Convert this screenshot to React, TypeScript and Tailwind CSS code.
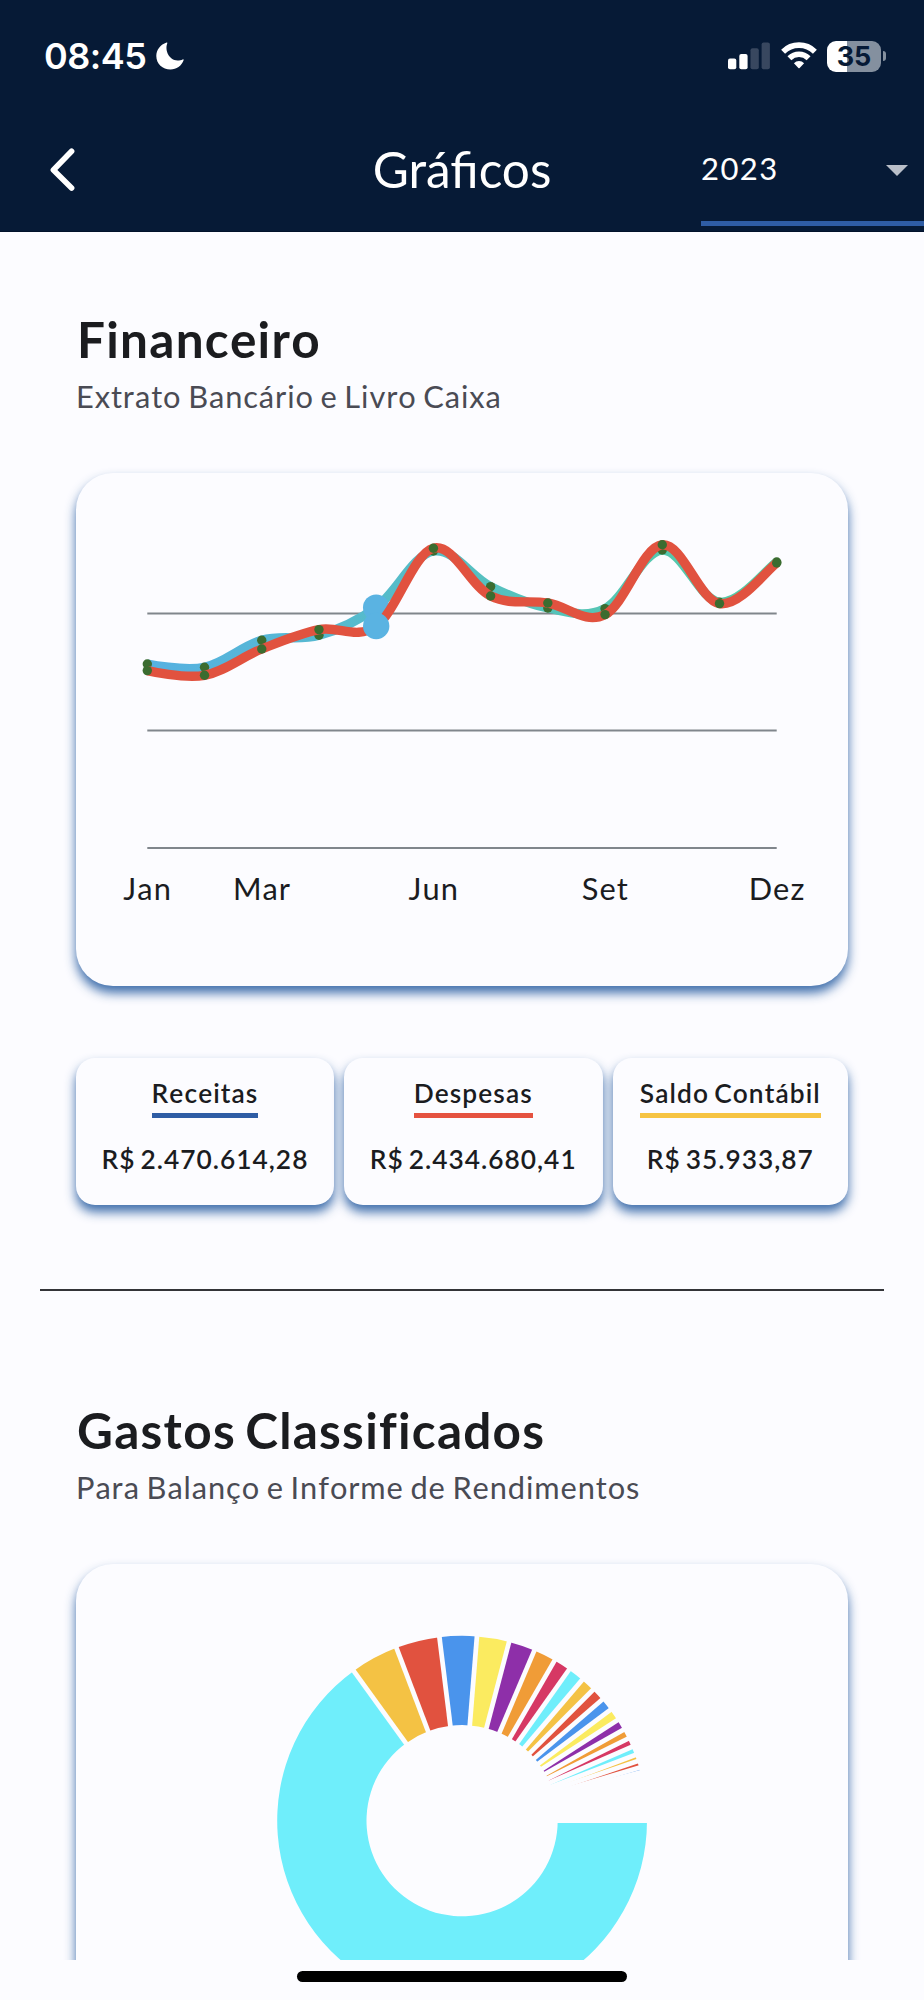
import { ReactNode } from "react";

type Point = [number, number];

interface ISummary {
  label: string;
  value: string;
  width: string;
  underline: string;
}

const STEP = 57.22;
const START_X = 147.3;

const receitas = [
  664, 667.3, 640.3, 635.3, 607.6, 551, 586.6, 608, 608.6, 550, 602.3, 562,
];
const despesas = [
  670.6, 675.3, 649, 629.6, 626, 548.2, 596, 603, 614.6, 544.8, 603.6, 563,
];
const SELECTED = 4;

const months = [
  { label: "Jan", index: 0 },
  { label: "Mar", index: 2 },
  { label: "Jun", index: 5 },
  { label: "Set", index: 8 },
  { label: "Dez", index: 11 },
];

const summaries: ISummary[] = [
  {
    label: "Receitas",
    value: "R$ 2.470.614,28",
    width: "w-[258px]",
    underline: "border-[#2f5da5]",
  },
  {
    label: "Despesas",
    value: "R$ 2.434.680,41",
    width: "w-[258.5px]",
    underline: "border-[#e55240]",
  },
  {
    label: "Saldo Contábil",
    value: "R$ 35.933,87",
    width: "w-[235.5px]",
    underline: "border-[#f6c443]",
  },
];

// slice limits in degrees, counter-clockwise from the right
const limits = [
  360, 125.9, 110.8, 97.04, 85.4, 75.27, 67, 60, 54.7, 49.55, 45, 40.85, 36.8,
  32.9, 29.4, 26.3, 23.5, 20.8, 18.75, 16.7, 15.2,
];
const sliceColors = [
  "#6feefb",
  "#f4c244",
  "#e1523f",
  "#4a94ec",
  "#fbeb60",
  "#8e2fa9",
  "#f09c37",
  "#d63864",
];

const toPoints = (values: number[]): Point[] =>
  values.map((y, i) => [START_X + STEP * i, y]);

const curve = (points: Point[]) => {
  const smoothness = 0.35;
  let d = `M${points[0][0]} ${points[0][1]}`;
  let tx = 0;
  let ty = 0;
  for (let i = 1; i < points.length; i++) {
    const prev = points[i - 1];
    const current = points[i];
    const next = points[i + 1] ?? current;
    const c1 = [prev[0] + tx, prev[1] + ty];
    tx = ((next[0] - prev[0]) / 2) * smoothness;
    ty = ((next[1] - prev[1]) / 2) * smoothness;
    d += ` C${c1[0]} ${c1[1]} ${current[0] - tx} ${current[1] - ty} ${current[0]} ${current[1]}`;
  }
  return d;
};

const polar = (radius: number, deg: number): Point => {
  const rad = (deg * Math.PI) / 180;
  return [462.1 + radius * Math.cos(rad), 1820.7 - radius * Math.sin(rad)];
};

const slicePath = (from: number, to: number) => {
  const outer = 184.9;
  const inner = 95.6;
  const large = from - to > 180 ? 1 : 0;
  return `M${polar(outer, from)} A${outer} ${outer} 0 ${large} 1 ${polar(outer, to)} L${polar(inner, to)} A${inner} ${inner} 0 ${large} 0 ${polar(inner, from)} Z`;
};

const StatusBar = () => (
  <div className="flex h-[112px] items-center justify-between pr-[38px] pl-[44px]">
    <div className="flex items-center gap-[10px]">
      <span className="font-['Inter'] text-[36px] leading-none font-semibold tracking-[-0.5px]">
        08:45
      </span>
      <svg className="h-[28px] w-[28px]" viewBox="0 0 28 28" fill="#fff">
        <path d="M10.6 0.6C11.2 0.3 11.6 0.7 11.3 1.3C8.5 8.6 13.2 18.4 21.5 18.4C23.6 18.4 25.2 18 26.7 17.4C27.3 17.2 27.8 17.7 27.6 18.3C25.5 24 20.5 27.5 14.5 27.5C6.6 27.5 0.3 21.8 0.3 14C0.3 8 4.5 2.6 10.6 0.6Z" />
      </svg>
    </div>
    <div className="flex items-center">
      <svg className="h-[28px] w-[42px]" viewBox="0 0 42 28">
        <rect x="0" y="16.5" width="8.3" height="10.8" rx="2" fill="#fff" />
        <rect x="11.3" y="12" width="8.3" height="15.3" rx="2" fill="#fff" />
        <rect x="22.5" y="6.3" width="8.3" height="21" rx="2" fill="#38475f" />
        <rect x="33.6" y="0.6" width="8.3" height="26.7" rx="2" fill="#38475f" />
      </svg>
      <svg
        className="ml-[11px] h-[28px] w-[36px]"
        viewBox="0 0 36 28"
        fill="none"
        stroke="#fff"
        strokeWidth="5.6"
      >
        <path d="M2.1 9.7A22.6 22.6 0 0 1 33.9 9.7" />
        <path d="M8.4 16.2A13.8 13.8 0 0 1 27.6 16.2" />
        <path
          d="M12.9 21.2A7.3 7.3 0 0 1 23.1 21.2L18.6 25.9Q18 26.5 17.4 25.9Z"
          fill="#fff"
          stroke="none"
        />
      </svg>
      <div className="ml-[10px] flex h-[31px] w-[54px] items-center justify-center rounded-[9px] bg-[linear-gradient(to_right,#fff_20px,#84909f_20px)]">
        <span className="font-['Inter'] text-[27px] leading-none font-bold text-[#061a36]">
          35
        </span>
      </div>
      <div className="ml-[2px] h-[10px] w-[3px] rounded-r-full bg-[#84909f]" />
    </div>
  </div>
);

const Header = () => (
  <header className="h-[232px] shrink-0 border-b border-[#02122b] bg-[#061a36] text-white">
    <StatusBar />
    <nav className="grid h-[114px] grid-cols-[223px_1fr_223px]">
      <button type="button" aria-label="Voltar" className="flex items-center pl-[49px]">
        <svg
          className="h-[44px] w-[28px]"
          viewBox="0 0 28 44"
          fill="none"
          stroke="#fff"
          strokeWidth="5.6"
          strokeLinecap="round"
          strokeLinejoin="round"
        >
          <path d="M22.6 4.3L4.4 23L22.6 41" />
        </svg>
      </button>
      <h1 className="pt-[1px] text-center text-[49.5px] leading-[113px] [font-kerning:normal]">
        Gráficos
      </h1>
      <div className="flex items-center justify-between border-b-[5px] border-[#2f5da5] pt-[3px] pr-[16px]">
        <span className="text-[31px] leading-none tracking-[1.4px]">2023</span>
        <svg className="mt-[5px] h-[11px] w-[22px]" viewBox="0 0 22 11">
          <path d="M0 0H22L11 11Z" fill="#b9bfc9" />
        </svg>
      </div>
    </nav>
  </header>
);

const SectionTitle = ({ title, subtitle }: { title: string; subtitle: string }) => (
  <div>
    <h2 className="pl-[1px] text-[49.5px] leading-[60px] font-bold tracking-[1.25px] [word-spacing:-4px]">
      {title}
    </h2>
    <p className="mt-2 text-[30.8px] leading-[40px] tracking-[0.9px] [word-spacing:-2.1px] text-[#4a4b54]">
      {subtitle}
    </p>
  </div>
);

const Card = ({ children }: { children: ReactNode }) => (
  <div className="mt-[56px] h-[513px] rounded-[37px] bg-[#fcfcff] shadow-[0_7px_11px_rgba(38,91,160,0.88)]">
    {children}
  </div>
);

const Dots = ({ points }: { points: Point[] }) => (
  <>
    {points.map(([x, y], i) => (
      <circle
        key={i}
        cx={x}
        cy={y}
        r={i === SELECTED ? 13.2 : 4.7}
        fill={i === SELECTED ? "#5ab3e2" : "#3b6c30"}
      />
    ))}
  </>
);

const LineChart = () => {
  const income = toPoints(receitas);
  const expenses = toPoints(despesas);

  return (
    <svg className="h-[513px] w-[772px]" viewBox="76 473 772 513" fill="none">
      <defs>
        <linearGradient
          id="income"
          gradientUnits="userSpaceOnUse"
          x1="147"
          y1="0"
          x2="777"
          y2="0"
        >
          <stop offset="0" stopColor="#56b1e2" />
          <stop offset="1" stopColor="#55cda3" />
        </linearGradient>
      </defs>
      {[613.5, 730.5, 848].map((y) => (
        <path key={y} d={`M147.3 ${y}H776.7`} stroke="#80868c" strokeWidth="2" />
      ))}
      <path d={curve(income)} stroke="url(#income)" strokeWidth="9.4" />
      <Dots points={income} />
      <path d={curve(expenses)} stroke="#e1523f" strokeWidth="9.4" />
      <Dots points={expenses} />
      {months.map(({ label, index }) => (
        <text
          key={label}
          x={START_X + STEP * index + 0.3}
          y="900"
          textAnchor="middle"
          className="fill-[#1b1c1f] text-[30.8px] tracking-[1px]"
        >
          {label}
        </text>
      ))}
    </svg>
  );
};

const DonutChart = () => (
  <svg className="h-[513px] w-[772px]" viewBox="76 1564 772 513">
    {limits.slice(1).map((to, i) => (
      <path
        key={to}
        d={slicePath(limits[i], to)}
        fill={sliceColors[i % sliceColors.length]}
      />
    ))}
    {limits.map((deg) => (
      <path
        key={deg}
        d={`M${polar(90, deg)} L${polar(188, deg)}`}
        stroke="#fcfcff"
        strokeWidth="4.7"
      />
    ))}
  </svg>
);

const App = () => (
  <div className="flex h-[2000px] w-[924px] flex-col overflow-hidden bg-[#fcfcff] font-['Lato',sans-serif] text-[#1b1c1f] [font-kerning:none]">
    <Header />
    <main className="h-[1727.5px] shrink-0 overflow-hidden">
      <section className="px-[76px] pt-[77px]">
        <SectionTitle
          title="Financeiro"
          subtitle="Extrato Bancário e Livro Caixa"
        />
        <Card>
          <LineChart />
        </Card>
        <div className="mt-[72px] flex justify-between">
          {summaries.map(({ label, value, width, underline }) => (
            <div
              key={label}
              className={`${width} flex h-[147px] flex-col items-center rounded-[19px] bg-[#fcfcff] pt-[17px] text-[26.3px] font-semibold [word-spacing:-2.5px] shadow-[0_7px_11px_rgba(38,91,160,0.88)]`}
            >
              <span
                className={`${underline} border-b-[5px] pb-[2px] leading-[36px] tracking-[1.1px]`}
              >
                {label}
              </span>
              <span className="mt-[23px] leading-[36px] tracking-[1px]">
                {value}
              </span>
            </div>
          ))}
        </div>
      </section>
      <hr className="mx-[40px] mt-[84px] border-t-2 border-[#333438]" />
      <section className="px-[76px] pt-[109px]">
        <SectionTitle
          title="Gastos Classificados"
          subtitle="Para Balanço e Informe de Rendimentos"
        />
        <Card>
          <DonutChart />
        </Card>
      </section>
    </main>
    <div className="flex justify-center pt-[11px]">
      <div className="h-[11.5px] w-[330px] rounded-full bg-black" />
    </div>
  </div>
);

export default App;
